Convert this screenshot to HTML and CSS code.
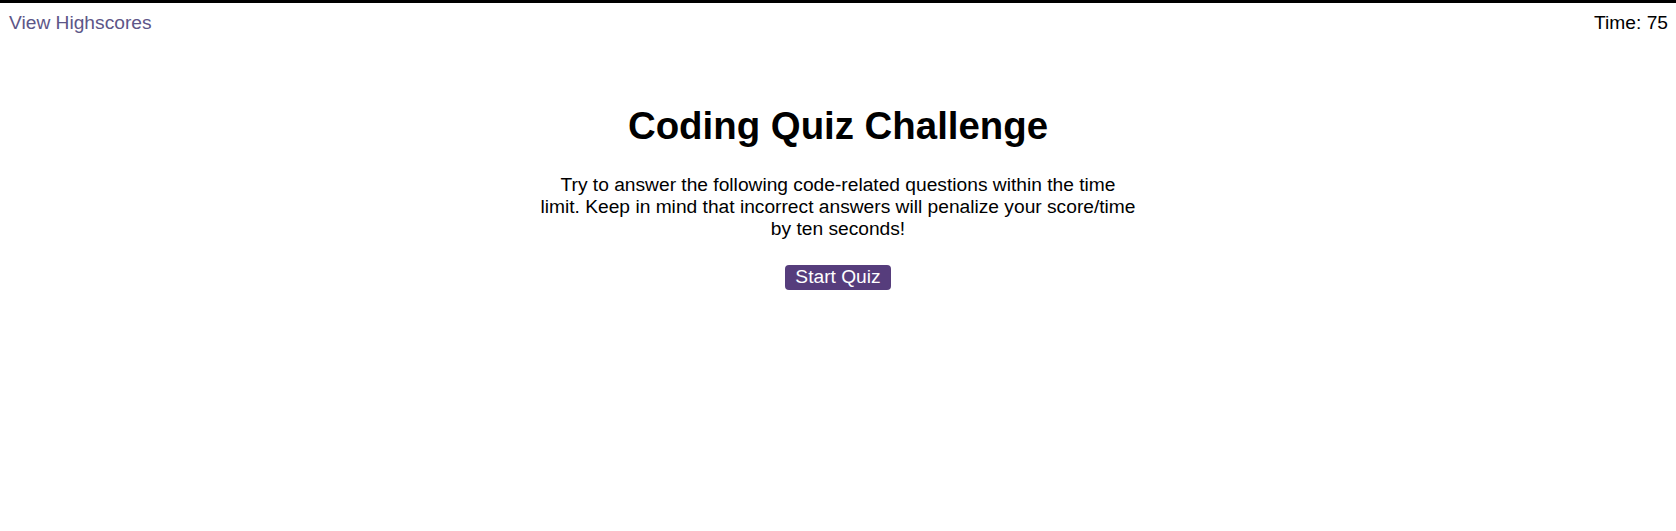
FILE: index.html
```html
<!DOCTYPE html>
<html lang="en">
<head>
<meta charset="utf-8">
<title>Coding Quiz Challenge</title>
<link rel="stylesheet" href="styles.css">
</head>
<body>
<header class="topbar">
  <a class="highscores-link" href="#">View Highscores</a>
  <div class="timer">Time: <span class="timer-value">75</span></div>
</header>
<main class="intro">
  <h1 class="intro-title">Coding Quiz Challenge</h1>
  <p class="intro-text">Try to answer the following code-related questions within the time limit. Keep in mind that incorrect answers will penalize your score/time by ten seconds!</p>
  <button class="start-btn" type="button">Start Quiz</button>
</main>
</body>
</html>
```

FILE: styles.css
```css
html {
  background: #fff;
}

body {
  margin: 0;
  border-top: 3px solid #000;
  font-family: "Liberation Sans", Arial, sans-serif;
  font-size: 19.2px;
  color: #000;
}

.topbar {
  display: flex;
  justify-content: space-between;
  align-items: flex-start;
  padding: 9px 8px 0 9px;
}

.highscores-link {
  color: #5d5688;
  text-decoration: none;
}

.timer {
  color: #000;
}

.intro {
  display: flex;
  flex-direction: column;
  align-items: center;
  text-align: center;
}

.intro-title {
  font-size: 38.4px;
  font-weight: bold;
  margin: 70px 0 26px 0;
}

.intro-text {
  max-width: 598px;
  margin: 0 0 25px 0;
}

.start-btn {
  font-family: "Liberation Sans", Arial, sans-serif;
  font-size: 19.2px;
  color: #fff;
  background: #563d7c;
  border: none;
  border-radius: 4px;
  padding: 1px 10px 2px 10px;
  cursor: pointer;
}
```
